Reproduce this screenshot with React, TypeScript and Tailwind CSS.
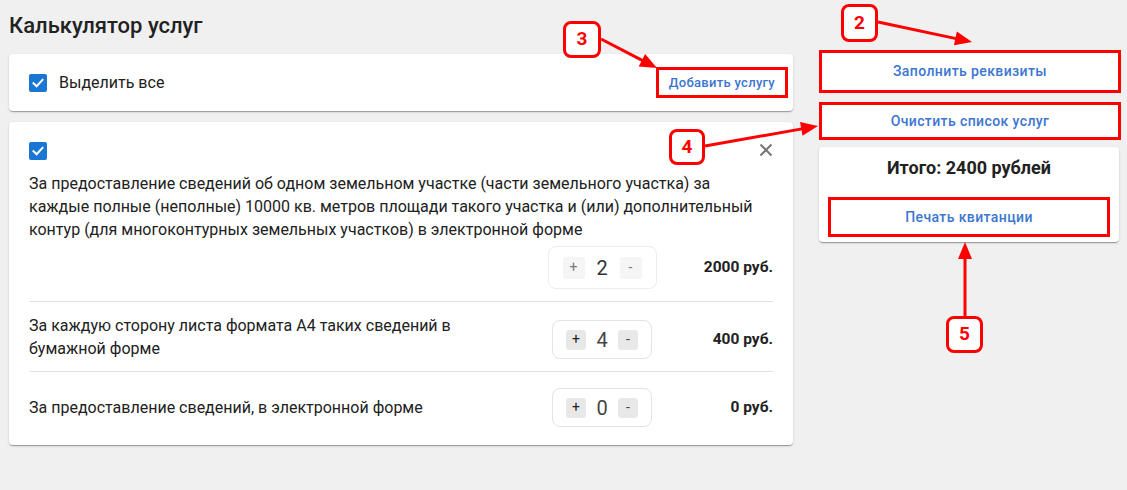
import React from "react";

const Check = () => (
  <div className="w-[18px] h-[18px] rounded-[2px] bg-[#1976d2] flex items-center justify-center shrink-0">
    <svg width="14" height="14" viewBox="0 0 14 14" fill="none">
      <path d="M2.5 7.2 L5.6 10.2 L11.5 3.8" stroke="white" strokeWidth="2" strokeLinecap="square" />
    </svg>
  </div>
);

const Counter = ({ value, big }: { value: number; big?: boolean }) =>
  big ? (
    <div className="w-[109px] h-[43px] rounded-[8px] border border-[#ececec] flex items-center justify-between px-[14px]">
      <div className="w-[22px] h-[22px] rounded-[3px] bg-[#f5f5f5] text-[#777] text-[14px] flex items-center justify-center">+</div>
      <div className="text-[20px] text-[#333] leading-none">{value}</div>
      <div className="w-[22px] h-[22px] rounded-[3px] bg-[#f5f5f5] text-[#777] text-[14px] flex items-center justify-center">-</div>
    </div>
  ) : (
    <div className="w-[100px] h-[39px] rounded-[8px] border border-[#e3e3e3] flex items-center justify-between px-[13px]">
      <div className="w-[20px] h-[20px] rounded-[3px] bg-[#e8e8e8] text-[#222] text-[14px] flex items-center justify-center">+</div>
      <div className="text-[20px] text-[#444] leading-none">{value}</div>
      <div className="w-[20px] h-[20px] rounded-[3px] bg-[#e8e8e8] text-[#444] text-[14px] flex items-center justify-center">-</div>
    </div>
  );

const Badge = ({ n, className }: { n: string; className: string }) => (
  <div
    className={
      "absolute border-[3px] border-[#ff0000] rounded-[8px] bg-white text-[#ff0000] font-bold text-[19px] flex items-center justify-center " +
      className
    }
  >
    {n}
  </div>
);

const arrows: [number, number, number, number][] = [
  [878, 22, 972, 42],
  [601, 39, 657, 68],
  [705, 146, 818, 126],
  [965, 316, 965, 242],
];

const Arrow = ({ a }: { a: [number, number, number, number] }) => {
  const [x1, y1, x2, y2] = a;
  const dx = x2 - x1;
  const dy = y2 - y1;
  const len = Math.hypot(dx, dy);
  const ux = dx / len;
  const uy = dy / len;
  const L = 17;
  const W = 7;
  const bx = x2 - ux * L;
  const by = y2 - uy * L;
  const pts = `${x2},${y2} ${bx - uy * W},${by + ux * W} ${bx + uy * W},${by - ux * W}`;
  return (
    <g>
      <line x1={x1} y1={y1} x2={bx + ux * 2} y2={by + uy * 2} stroke="#ff0000" strokeWidth="3" />
      <polygon points={pts} fill="#ff0000" />
    </g>
  );
};

const shadow = "shadow-[0_2px_1px_-1px_rgba(0,0,0,0.2),0_1px_1px_0_rgba(0,0,0,0.14),0_1px_3px_0_rgba(0,0,0,0.12)]";

export default function App() {
  return (
    <div className="relative w-[1127px] h-[490px] bg-[#f0f0f0] font-['Roboto',sans-serif] text-[#212121] overflow-hidden">
      <div className="flex gap-[26px] pl-[9px]">
        {/* left column */}
        <div className="w-[784px] pt-[13px]">
          <h1 className="text-[22px] leading-[26px] font-medium text-[#222]">Калькулятор услуг</h1>
          <div className={"mt-[15px] h-[57px] bg-white rounded-[4px] flex items-center justify-between pl-[20px] pr-[5px] " + shadow}>
            <div className="flex items-center gap-[12px]">
              <Check />
              <span className="text-[16px]">Выделить все</span>
            </div>
            <button className="border-[3px] border-[#ff0000] px-[10px] h-[31px] text-[13px] font-medium text-[#3b76d1] tracking-[0.3px]">
              Добавить услугу
            </button>
          </div>

          <div className={"mt-[11px] bg-white rounded-[4px] pt-[20px] px-[20px] " + shadow}>
            <div className="flex items-center justify-between h-[18px]">
              <Check />
              <svg width="14" height="14" viewBox="0 0 14 14" className="-mt-[2px]">
                <path d="M1.5 1.5 L12.5 12.5 M12.5 1.5 L1.5 12.5" stroke="#757575" strokeWidth="2" />
              </svg>
            </div>
            <div className="border-b border-[#e0e0e0] pb-[12px]">
              <p className="mt-[12px] text-[16px] leading-[23px]">
                За предоставление сведений об одном земельном участке (части земельного участка) за
                <br />
                каждые полные (неполные) 10000 кв. метров площади такого участка и (или) дополнительный
                <br />
                контур (для многоконтурных земельных участков) в электронной форме
              </p>
              <div className="flex justify-end items-center mt-[5px]">
                <div className="w-[124px] flex justify-center">
                  <Counter value={2} big />
                </div>
                <div className="w-[109px] text-right text-[15.5px] font-bold">2000 руб.</div>
              </div>
            </div>
            <div className="border-b border-[#e0e0e0] pt-[12px] pb-[11px] flex items-start">
              <p className="flex-1 text-[16px] leading-[23px]">
                За каждую сторону листа формата А4 таких сведений в
                <br />
                бумажной форме
              </p>
              <div className="w-[124px] flex justify-center mt-[6px]">
                <Counter value={4} />
              </div>
              <div className="w-[109px] text-right text-[15.5px] font-bold mt-[6px] h-[39px] leading-[39px]">400 руб.</div>
            </div>
            <div className="pt-[16px] pb-[18px] flex items-center">
              <p className="flex-1 text-[16px] leading-[23px]">За предоставление сведений, в электронной форме</p>
              <div className="w-[124px] flex justify-center">
                <Counter value={0} />
              </div>
              <div className="w-[109px] text-right text-[15.5px] font-bold">0 руб.</div>
            </div>
          </div>
        </div>

        {/* right column */}
        <div className="w-[300px] pt-[50px]">
          <button className="w-[302px] h-[43px] border-[3px] border-[#ff0000] bg-white text-[14px] font-medium text-[#3b76d1] tracking-[0.4px]">
            Заполнить реквизиты
          </button>
          <button className="mt-[9px] w-[302px] h-[38px] border-[3px] border-[#ff0000] bg-white text-[14px] font-medium text-[#3b76d1] tracking-[0.4px]">
            Очистить список услуг
          </button>
          <div className={"mt-[7px] bg-white rounded-[4px] px-[9px] pt-[9px] pb-[5px] " + shadow}>
            <div className="text-center text-[18px] leading-[24px] font-bold">Итого: 2400 рублей</div>
            <button className="mt-[17px] w-full h-[40px] border-[3px] border-[#ff0000] bg-white text-[14px] font-medium text-[#3b76d1] tracking-[0.4px]">
              Печать квитанции
            </button>
          </div>
        </div>
      </div>

      <svg className="absolute inset-0 pointer-events-none" width="1127" height="490">
        {arrows.map((a, i) => (
          <Arrow key={i} a={a} />
        ))}
      </svg>
      <Badge n="2" className="left-[841px] top-[4px] w-[37px] h-[38px]" />
      <Badge n="3" className="left-[563px] top-[21px] w-[38px] h-[37px]" />
      <Badge n="4" className="left-[669px] top-[129px] w-[36px] h-[36px]" />
      <Badge n="5" className="left-[946px] top-[316px] w-[37px] h-[37px]" />
    </div>
  );
}
